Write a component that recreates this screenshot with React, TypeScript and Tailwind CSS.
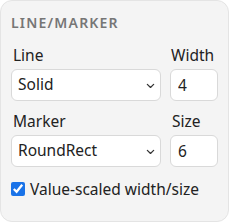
import React, { useState } from "react";

const LINE_STYLES = ["Solid", "Dashed", "Dotted"];
const MARKERS = ["RoundRect", "Circle", "Square", "Diamond"];

function Chevron() {
  return (
    <svg viewBox="0 0 10 6" className="h-[6px] w-[9px]" fill="none" stroke="#333" strokeWidth="1.4" strokeLinecap="round" strokeLinejoin="round">
      <path d="M1.5 1.2 L5 4.6 L8.5 1.2" />
    </svg>
  );
}

function SelectBox({ value, options, onChange }: { value: string; options: string[]; onChange: (v: string) => void }) {
  return (
    <div className="relative h-[32px]">
      <select
        value={value}
        onChange={(e) => onChange(e.target.value)}
        className="h-full w-full appearance-none rounded-[6px] border border-[#d9d9d9] bg-white pl-[6px] pr-6 text-[15.5px] text-[#222] outline-none"
      >
        {options.map((o) => (
          <option key={o} value={o}>
            {o}
          </option>
        ))}
      </select>
      <span className="pointer-events-none absolute right-[6px] top-[14px]">
        <Chevron />
      </span>
    </div>
  );
}

export default function App() {
  const [line, setLine] = useState("Solid");
  const [width, setWidth] = useState("4");
  const [marker, setMarker] = useState("RoundRect");
  const [size, setSize] = useState("6");
  const [scaled, setScaled] = useState(true);

  return (
    <div className="h-[222px] w-[229px] bg-white" style={{ fontFamily: '"Noto Sans", sans-serif' }}>
      <div className="flex h-full flex-col rounded-[12px] border border-[#e4e4e4] bg-[#f4f4f4] px-[10px] pt-[12px]">
        <h3 className="text-[14px] font-semibold leading-[20px] tracking-[1.2px] text-[#767676]">LINE/MARKER</h3>

        <div className="mt-[12px] grid grid-cols-[1fr_48px] gap-x-[9px]">
          <label className="pl-[2px] text-[15.5px] leading-[20px] text-[#222]">Line</label>
          <label className="pl-[1px] text-[15.5px] leading-[20px] text-[#222]">Width</label>
          <div className="mt-[4px]">
            <SelectBox value={line} options={LINE_STYLES} onChange={setLine} />
          </div>
          <input
            value={width}
            onChange={(e) => setWidth(e.target.value)}
            className="mt-[4px] h-[32px] w-full rounded-[6px] border border-[#d9d9d9] bg-white px-[7px] text-[15.5px] text-[#222] outline-none"
          />

          <label className="mt-[10px] pl-[2px] text-[15.5px] leading-[20px] text-[#222]">Marker</label>
          <label className="mt-[10px] pl-[2px] text-[15.5px] leading-[20px] text-[#222]">Size</label>
          <div className="mt-[4px]">
            <SelectBox value={marker} options={MARKERS} onChange={setMarker} />
          </div>
          <input
            value={size}
            onChange={(e) => setSize(e.target.value)}
            className="mt-[4px] h-[32px] w-full rounded-[6px] border border-[#d9d9d9] bg-white px-[7px] text-[15.5px] text-[#222] outline-none"
          />
        </div>

        <label className="mt-[12px] flex items-center gap-[5px] text-[15.5px] leading-[20px] text-[#222]">
          <input
            type="checkbox"
            checked={scaled}
            onChange={(e) => setScaled(e.target.checked)}
            className="h-[14px] w-[14px] accent-[#1a73e8]"
          />
          Value-scaled width/size
        </label>
      </div>
    </div>
  );
}
